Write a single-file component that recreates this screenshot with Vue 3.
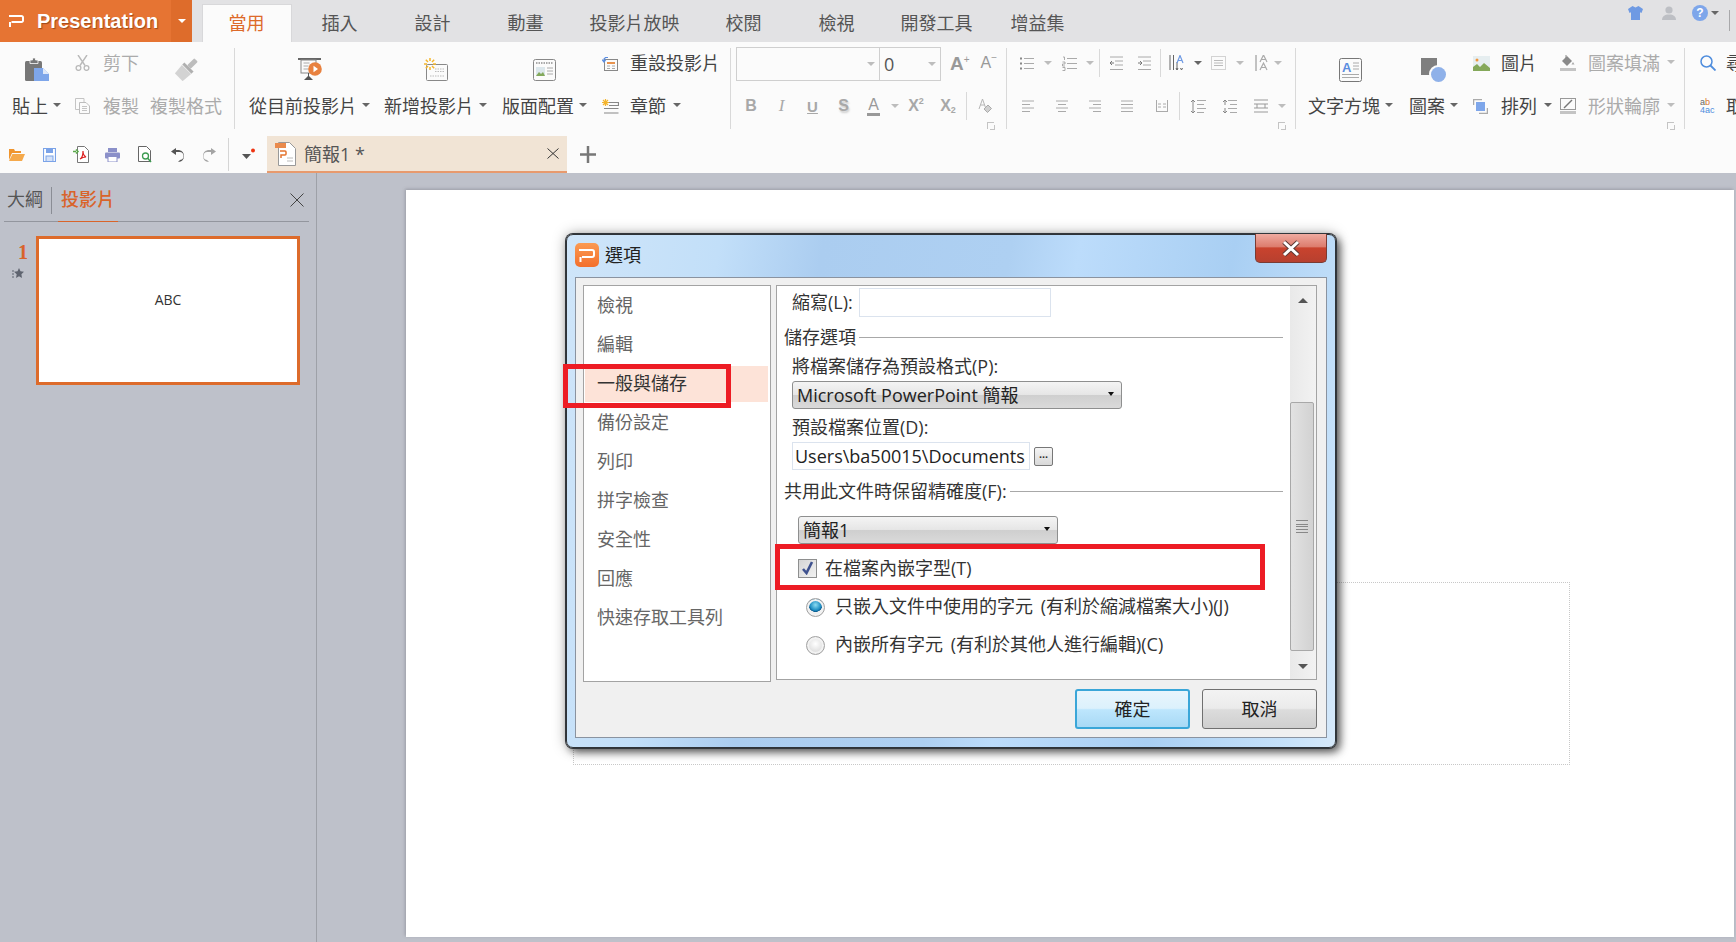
<template>
  <div class="app">
    <!-- title bar -->
    <header class="titlebar">
      <div class="app-btn">
        <svg class="app-logo" width="15" height="12" viewBox="0 0 15 12"><path d="M0 1h12.500a1.500 1.500 0 0 1 1.500 1.500v3A1.500 1.500 0 0 1 12.500 7H2.500M1 7v5" fill="none" stroke="#fff" stroke-width="2" /></svg>
        <span class="app-name">Presentation</span>
        <span class="app-drop"><i class="caret white" /></span>
      </div>
      <nav class="tabs">
        <div v-for="t in tabs" :key="t.label" class="tab" :class="[t.size, { active: t.active }]">{{ t.label }}</div>
      </nav>
      <div class="top-icons">
        <svg width="15" height="14" viewBox="0 0 15 14"><path d="M4.500 0 0 3l1.500 4L3 6.300V14h9V6.300l1.500.7L15 3l-4.500-3-3 1.600z" fill="#6f9ae3" /></svg>
        <svg class="gap-user" width="14" height="14" viewBox="0 0 14 14"><circle cx="7" cy="4" r="3.600" fill="#bdbfc4" /><path d="M0 14c0-4 3-5 5-5.500h4c2 .5 5 1.500 5 5.500z" fill="#bdbfc4" /></svg>
        <span class="help">?</span>
        <i class="caret help-caret" />
        <span class="top-sep" />
      </div>
    </header>

    <!-- ribbon -->
    <section class="ribbon">
      <div class="groups">
        <div class="group g-clip">
          <div class="big">
            <div class="big-icon">
              <svg width="24" height="23" viewBox="0 0 24 23"><rect y="3" width="17" height="20" rx="1.500" fill="#777" /><path d="M5 2h2.500V0h3v2H13v3.500H5z" fill="#777" stroke="#fbfbfb" stroke-width=".8" /><path d="M9 10h9l6 6v7H9z" fill="#7ea6ea" /><path d="M18 10v6h6z" fill="#dfe8f8" /></svg>
            </div>
            <div class="big-label">貼上<i class="caret" /></div>
          </div>
          <div class="col m-cut">
            <div class="si off">
              <span class="si-ico"><svg width="15" height="16" viewBox="0 0 15 16"><path d="M3 0l7 10.500M12 0 5 10.500" fill="none" stroke="#b9b9b9" stroke-width="1.400" /><circle cx="3.500" cy="13" r="2.400" fill="none" stroke="#b9b9b9" stroke-width="1.300" /><circle cx="11.500" cy="13" r="2.400" fill="none" stroke="#b9b9b9" stroke-width="1.300" /></svg></span>
              剪下
            </div>
            <div class="si off">
              <span class="si-ico"><svg width="15" height="16" viewBox="0 0 15 16"><path d="M9 4V.5H.5v11H4" fill="none" stroke="#c4c4c4" /><path d="M4.500 4.500H11l3.500 3.500v7.500h-10z" fill="#fbfbfb" stroke="#bdbdbd" /><path d="M7 8.500h5M7 10.500h5M7 12.500h5" stroke="#c4c4c4" /></svg></span>
              複製
            </div>
          </div>
          <div class="big m-fmt off">
            <div class="big-icon">
              <svg width="23" height="23" viewBox="0 0 23 23"><g transform="rotate(45 11.500 11.500)"><rect x="9" y="-2" width="5" height="10" rx="1" fill="#bdbdbd" /><rect x="5" y="8" width="13" height="3" fill="#b0b0b0" /><path d="M5 11.500h13l-1 11H6z" fill="#d3d3d3" /></g></svg>
            </div>
            <div class="big-label">複製格式</div>
          </div>
        </div>

        <div class="group g-slide">
          <div class="big">
            <div class="big-icon">
              <svg width="24" height="23" viewBox="0 0 24 23"><path d="M0 1h23" stroke="#666" stroke-width="2" /><rect x="3" y="2" width="15" height="13" fill="#fbfbfb" stroke="#888" /><path d="M5.500 5h6M5.500 8h5M5.500 11h5" stroke="#aaa" /><circle cx="17" cy="11" r="6.800" fill="#e8813f" /><path d="M15.500 7.800 20 11l-4.500 3.200z" fill="#fff" /><path d="M10 15v3l-4 4h9l-4-4v-3z" fill="#555" /></svg>
            </div>
            <div class="big-label">從目前投影片<i class="caret" /></div>
          </div>
          <div class="big m-new">
            <div class="big-icon">
              <svg width="24" height="23" viewBox="0 0 24 23"><rect x="2.500" y="6.500" width="21" height="16" rx="1" fill="#fbfbfb" stroke="#888" /><path d="M11 11h10M11 13.500h10M6 18h14" stroke="#bbb" stroke-dasharray="1.500 1" /><path d="M6 0v3M6 9v3M0 6h3M9 6h3M1.800 1.800 4 4M8 8l2.200 2.200M10.200 1.800 8 4M4 8l-2.200 2.200" stroke="#f5b62c" stroke-width="1.500" /></svg>
            </div>
            <div class="big-label">新增投影片<i class="caret" /></div>
          </div>
          <div class="big m-lay">
            <div class="big-icon">
              <svg width="23" height="22" viewBox="0 0 23 22"><rect x=".5" y=".5" width="22" height="21" rx="2" fill="#fbfbfb" stroke="#888" /><path d="M3 4h17" stroke="#aaa" stroke-width="2" stroke-dasharray="1.500 1" /><rect x="3" y="8" width="9" height="9" fill="#dce7ec" /><path d="M3 17l3-4 2 2 2-2 2 4z" fill="#83a95c" /><path d="M14 9h6M14 12h6M14 15h6" stroke="#aaa" /></svg>
            </div>
            <div class="big-label">版面配置<i class="caret" /></div>
          </div>
          <div class="col m-reset">
            <div class="si">
              <span class="si-ico"><svg width="16" height="15" viewBox="0 0 16 15"><rect x="2.500" y="3.500" width="13" height="11" fill="#fbfbfb" stroke="#888" /><path d="M5 7h8" stroke="#e8934f" stroke-width="2" /><path d="M5 10h3M10 10h3M5 12.500h3M10 12.500h3" stroke="#aaa" /><path d="M6 1.500H3.500L2 3v2M0 3.500 2 6l2-2.500" fill="none" stroke="#5b8de0" stroke-width="1.200" /></svg></span>
              重設投影片
            </div>
            <div class="si">
              <span class="si-ico"><svg width="17" height="15" viewBox="0 0 17 15"><path d="M3.500 0v7M0 3.500h7M1 1l5 5M6 1 1 6" stroke="#f4b42c" stroke-width="1.200" /><path d="M7 3.500h9.500v3H7M2 9.500h14.500M2 14h14.500" fill="none" stroke="#888" stroke-width="1.200" /></svg></span>
              章節<i class="caret" />
            </div>
          </div>
        </div>

        <div class="group g-font">
          <div class="cell font-r1">
            <div class="combo">
              <span class="combo-name"><i class="caret light" /></span>
              <span class="combo-size">0<i class="caret light" /></span>
            </div>
            <span class="grow-a">A<sup>+</sup></span>
            <span class="shrink-a">A<sup>−</sup></span>
          </div>
          <div class="cell font-r2">
            <span class="tx b">B</span>
            <span class="tx i">I</span>
            <span class="tx u">U</span>
            <span class="tx s">S</span>
            <span class="tx color-a">A</span>
            <i class="caret light" />
            <span class="tx">X<small>2</small></span>
            <span class="tx">X<sub>2</sub></span>
            <span class="mini-sep" />
            <svg width="14" height="16" viewBox="0 0 14 16"><path d="M1 11 4.500 1 8 11M2.500 7h4" fill="none" stroke="#b5b5b5" /><path d="m6 11 4-4 3.500 3.500-4 4z" fill="#d0d0d0" stroke="#aaa" /></svg>
          </div>
          <i class="launcher" />
        </div>

        <div class="group g-para">
          <div class="cell para-r1">
            <svg width="14" height="15" viewBox="0 0 14 15"><path d="M4 2.500h10M4 7.500h10M4 12.500h10" stroke="#aaa" /><path d="M0 2.500h2M0 7.500h2M0 12.500h2" stroke="#888" stroke-width="2" /></svg>
            <i class="caret light" />
            <svg width="15" height="15" viewBox="0 0 15 15"><path d="M5 2.500h10M5 7.500h10M5 12.500h10" stroke="#aaa" /><path d="M1 1h1.500v3M.5 6h2.500v2H.5v2H3M.5 11.500H3v3H.5" fill="none" stroke="#999" stroke-width=".8" /></svg>
            <i class="caret light" />
            <span class="mini-sep tall" />
            <svg width="13" height="15" viewBox="0 0 13 15"><path d="M0 1h13M5 5h8M5 9h8M0 13.500h13" stroke="#aaa" /><path d="M4 7H0m2-2-2 2 2 2" fill="none" stroke="#777" /></svg>
            <svg width="13" height="15" viewBox="0 0 13 15"><path d="M0 1h13M5 5h8M5 9h8M0 13.500h13" stroke="#aaa" /><path d="M0 7h4M2 5l2 2-2 2" fill="none" stroke="#777" /></svg>
            <span class="mini-sep tall" />
            <svg width="16" height="16" viewBox="0 0 16 16"><path d="M1 0v15M4.500 0v15M8 7v8" stroke="#666" /><path d="M7 13l1 2 1-2M11.500 13l1 2 1-2" fill="none" stroke="#666" /><path d="M8 8 11 .5 14 8M9.500 5.500h3" fill="none" stroke="#6f9ae3" stroke-width="1.200" /></svg>
            <i class="caret" />
            <svg width="15" height="14" viewBox="0 0 15 14"><rect x=".5" y=".5" width="14" height="13" fill="none" stroke="#aaa" stroke-dasharray="1 1" /><path d="M3 4.500h9M3 7h9M3 9.500h9" stroke="#bbb" /></svg>
            <i class="caret light" />
            <span />
            <svg width="16" height="16" viewBox="0 0 16 16"><path d="M1 0v16" stroke="#888" /><path d="M5 7 8.500 0 12 7M6.500 4.500h4M5 15l3.500-7 3.500 7M6.500 12.500h4" fill="none" stroke="#aaa" stroke-width="1.200" /></svg>
            <i class="caret light" />
          </div>
          <div class="cell para-r2">
            <svg width="12" height="12" viewBox="0 0 12 12"><path d="M0 1h12M0 4.500h8M0 8h12M0 11.500h8" stroke="#aaa" /></svg>
            <svg width="12" height="12" viewBox="0 0 12 12"><path d="M0 1h12M2 4.500h8M0 8h12M2 11.500h8" stroke="#aaa" /></svg>
            <svg width="12" height="12" viewBox="0 0 12 12"><path d="M0 1h12M4 4.500h8M0 8h12M4 11.500h8" stroke="#aaa" /></svg>
            <svg width="12" height="12" viewBox="0 0 12 12"><path d="M0 1h12M0 4.500h12M0 8h12M0 11.500h12" stroke="#aaa" /></svg>
            <svg width="12" height="12" viewBox="0 0 12 12"><path d="M.5 0v12M11.500 0v12M0 11.500h12M2 4h3M7 4h3M2 7h3M7 7h3" stroke="#aaa" /></svg>
            <span class="mini-sep tall" />
            <svg width="16" height="15" viewBox="0 0 16 15"><path d="M7 1.500h9M7 5.500h7M7 9.500h9M7 13.500h7" stroke="#aaa" /><path d="M3 1v13M1 3l2-2 2 2M1 12l2 2 2-2" fill="none" stroke="#888" /></svg>
            <svg width="15" height="15" viewBox="0 0 15 15"><path d="M6 1.500h9M8 5.500h7M6 9.500h9M8 13.500h7" stroke="#aaa" /><path d="M3 6V1M1 3l2-2 2 2M3 9v5M1 12l2 2 2-2" fill="none" stroke="#888" /></svg>
            <svg width="14" height="14" viewBox="0 0 14 14"><path d="M0 1h14M0 5h14M0 9h14M0 13h14M3 5v4M11 5v4" stroke="#999" /></svg>
            <i class="caret light" />
          </div>
          <i class="launcher" />
        </div>

        <div class="group g-draw">
          <div class="big m-text">
            <div class="big-icon">
              <svg width="23" height="24" viewBox="0 0 23 24"><rect x=".5" y=".5" width="22" height="23" rx="2" fill="#fbfbfb" stroke="#777" /><text x="3" y="14" class="ico-a">A</text><path d="M14 5h6M14 8h6M14 11h6M3 16.500h17M3 19.500h17" stroke="#aaa" /></svg>
            </div>
            <div class="big-label">文字方塊<i class="caret" /></div>
          </div>
          <div class="big m-shape">
            <div class="big-icon">
              <svg width="25" height="24" viewBox="0 0 25 24"><rect width="16" height="17" fill="#7f7f7f" /><circle cx="17" cy="16" r="9" fill="#fbfbfb" /><circle cx="17.500" cy="16.500" r="7.500" fill="#8fb1e9" /></svg>
            </div>
            <div class="big-label">圖案<i class="caret" /></div>
          </div>
          <div class="col m-pic">
            <div class="si">
              <span class="si-ico"><svg width="17" height="15" viewBox="0 0 17 15"><rect width="17" height="15" fill="#e6eef0" /><circle cx="4" cy="4" r="1.500" fill="#f0963e" /><path d="M0 15v-4l4-3 3 3 4-4 6 5v3z" fill="#84a85a" /></svg></span>
              圖片
            </div>
            <div class="si">
              <span class="si-ico"><svg width="15" height="15" viewBox="0 0 15 15"><path d="M.5 6V.5H9M14.500 9v5.500H6" fill="none" stroke="#aaa" stroke-width="1.500" /><rect x="3" y="3" width="9" height="9" fill="#7ea6ea" /></svg></span>
              排列<i class="caret" />
            </div>
          </div>
          <div class="col m-fill">
            <div class="si off">
              <span class="si-ico"><svg width="16" height="16" viewBox="0 0 16 16"><path d="M7 1 2 6l5 5 5-5z" fill="#8a8a8a" /><path d="M6 0v3" stroke="#8a8a8a" /><path d="M13 7l1.500 2.500h-3z" fill="#aaa" /><rect y="13" width="16" height="3" fill="#c4c4c4" /></svg></span>
              圖案填滿<i class="caret light" />
            </div>
            <div class="si off">
              <span class="si-ico"><svg width="16" height="16" viewBox="0 0 16 16"><rect x=".5" y=".5" width="15" height="11" fill="none" stroke="#999" /><path d="M4 10 12 2" stroke="#777" stroke-width="1.500" /><rect y="13" width="16" height="3" fill="#c4c4c4" /></svg></span>
              形狀輪廓<i class="caret light" />
            </div>
          </div>
          <i class="launcher" />
        </div>

        <div class="group g-find">
          <div class="col">
            <div class="si">
              <span class="si-ico"><svg width="16" height="16" viewBox="0 0 16 16"><circle cx="6.500" cy="6.500" r="5.500" fill="none" stroke="#4f8ddd" stroke-width="1.500" /><path d="m10.500 10.500 5 5" stroke="#4f8ddd" stroke-width="1.800" /></svg></span>
              尋找
            </div>
            <div class="si">
              <span class="si-ico"><svg width="16" height="16" viewBox="0 0 16 16"><text x="0" y="7" class="ico-ab">a<tspan fill="#d9752f">b</tspan></text><text x="0" y="15" class="ico-ab blue">4ac</text></svg></span>
              取代
            </div>
          </div>
        </div>
      </div>

      <!-- quick access and document tab -->
      <div class="qat">
        <div class="qat-icons">
          <svg width="16" height="12" viewBox="0 0 16 12"><path d="M0 2V0h5l1 2h6v2H3L0 11z" fill="#f0952e" /><path d="M3.500 5H16l-3 7H0z" fill="#f5a94b" /></svg>
          <svg width="13" height="14" viewBox="0 0 13 14"><path d="M.5.5h12v13H.5z" fill="#fff" stroke="#7ba3e8" stroke-width="1.200" /><rect x="3" y=".5" width="7" height="4.500" fill="#7ba3e8" /><rect x="3" y="8" width="7" height="5.500" fill="#d3e1f8" stroke="#7ba3e8" /></svg>
          <svg width="16" height="17" viewBox="0 0 16 17"><path d="M4.500.5h7l4 4v12h-11z" fill="#fff" stroke="#777" /><path d="M7 13c2-1 3-5 3-8 0 3 1 5 3 6-2 0-4 .5-6 2z" fill="none" stroke="#d22" stroke-width="1.200" /><path d="M0 5.500h3M3 3.500 5 5.500l-2 2" fill="none" stroke="#5aa84a" stroke-width="1.500" /></svg>
          <svg width="15" height="14" viewBox="0 0 15 14"><rect x="3" width="9" height="4" fill="#8b90c9" /><rect y="4.500" width="15" height="6" rx="1" fill="#8b90c9" /><rect x="3" y="8.500" width="9" height="5.500" fill="#fff" stroke="#8b90c9" /></svg>
          <svg width="14" height="17" viewBox="0 0 14 17"><path d="M.5.500h8l4 4v11H.5z" fill="#fff" stroke="#666" /><circle cx="7.500" cy="10" r="3" fill="none" stroke="#3e9c52" stroke-width="1.300" /><path d="m9.500 12 3.500 4" stroke="#3e9c52" stroke-width="1.500" /></svg>
          <svg width="13" height="14" viewBox="0 0 13 14"><path d="M5 4h3a4 4 0 0 1 1 8l-2 2c4 0 6-3 6-6 0-4-3-6-6-6H5V0L0 3.500 5 7z" fill="#555" /></svg>
          <svg width="13" height="14" viewBox="0 0 13 14"><path d="M8 4H5a4 4 0 0 0-1 8l2 2c-4 0-6-3-6-6 0-4 3-6 6-6h2V0l5 3.500L8 7z" fill="#a4a4a4" /></svg>
          <span class="qat-sep" />
          <svg width="14" height="13" viewBox="0 0 14 13"><path d="M0 6h9l-4.500 5z" fill="#555" /><circle cx="11" cy="2.500" r="2" fill="#e31" /></svg>
        </div>
        <div class="doc-tab">
          <svg width="21" height="24" viewBox="0 0 21 24"><path d="M3.500.5h11l6 6v17h-17z" fill="#fff" stroke="#999" /><rect y="1" width="11" height="5" fill="#ea8a4c" /><path d="M5 9h5a1 1 0 0 1 1 1v2a1 1 0 0 1-1 1H6v3" fill="none" stroke="#e3742f" stroke-width="1.500" /><path d="M12 16h6M12 19h6" stroke="#bbb" /></svg>
          <span class="doc-name">簡報1 *</span>
          <svg class="doc-close" width="12" height="11" viewBox="0 0 12 11"><path d="m.5.5 11 10M11.500.5l-11 10" stroke="#333" /></svg>
        </div>
        <svg class="doc-add" width="16" height="17" viewBox="0 0 16 17"><path d="M8 0v17M0 8.500h16" stroke="#777" stroke-width="2.500" /></svg>
      </div>
    </section>

    <!-- workspace -->
    <main class="work">
      <aside class="pane">
        <div class="pane-head">
          <span class="pane-tab">大綱</span>
          <span class="pane-sep" />
          <span class="pane-tab active">投影片</span>
          <svg class="pane-close" width="14" height="14" viewBox="0 0 14 14"><path d="m.5.5 13 13M13.500.5l-13 13" stroke="#444" /></svg>
        </div>
        <div class="thumb-row">
          <div class="thumb-side">
            <span class="thumb-num">1</span>
            <svg width="12" height="10" viewBox="0 0 12 10"><path d="M7 0l1.500 3.300L12 3.800 9.400 6.200 10 10 7 8.200 4 10l.7-3.800L2 3.800l3.500-.5z" fill="#5f6470" /><path d="M0 3h2M0 6h2M0 9h2" stroke="#5f6470" /></svg>
          </div>
          <div class="thumb">ABC</div>
        </div>
      </aside>
      <div class="canvas">
        <div class="slide">
          <div class="placeholder" />
        </div>
      </div>
    </main>

    <!-- options dialog -->
    <div class="dialog">
      <div class="dlg-title">
        <span class="dlg-logo">
          <svg width="16" height="13" viewBox="0 0 16 13"><path d="M0 1h13a2 2 0 0 1 2 2v3a2 2 0 0 1-2 2H3M1.500 8v5" fill="none" stroke="#fff" stroke-width="2" /></svg>
        </span>
        選項
      </div>
      <div class="dlg-close">
        <svg width="20" height="17" viewBox="0 0 20 17"><path d="m3 2 14 13M17 2 3 15" stroke="#5c3a36" stroke-width="5" /><path d="m3 2 14 13M17 2 3 15" stroke="#fff" stroke-width="3" /></svg>
      </div>
      <div class="dlg-inner">
        <div class="dlg-body">
          <ul class="opt-list">
            <li v-for="o in options" :key="o" class="opt" :class="{ selected: o === current }">{{ o }}</li>
          </ul>
          <div class="opt-pane">
            <div class="form">
              <div class="row abbr">
                <label class="abbr-label">縮寫(L):</label>
                <span class="field abbr-field" />
              </div>
              <div class="legend first">儲存選項<span class="rule" /></div>
              <div class="lbl save-lbl">將檔案儲存為預設格式(P):</div>
              <div class="select fmt-select">Microsoft PowerPoint 簡報<i class="caret black" /></div>
              <div class="lbl path-lbl">預設檔案位置(D):</div>
              <div class="row path-row">
                <span class="field path-field">Users\ba50015\Documents</span>
                <span class="browse">...</span>
              </div>
              <div class="legend second">共用此文件時保留精確度(F):<span class="rule" /></div>
              <div class="select doc-select">簡報1<i class="caret black" /></div>
              <div class="row check-row">
                <span class="check">
                  <svg width="13" height="14" viewBox="0 0 13 14"><path d="M2 8l3.500 4L11 1" fill="none" stroke="#3f528f" stroke-width="2.600" /></svg>
                </span>
                在檔案內嵌字型(T)
              </div>
              <div class="row radio-row one"><span class="radio on" />只嵌入文件中使用的字元 (有利於縮減檔案大小)(J)</div>
              <div class="row radio-row two"><span class="radio" />內嵌所有字元 (有利於其他人進行編輯)(C)</div>
            </div>
            <div class="scrollbar">
              <div class="sb-up"><i class="sb-arrow up" /></div>
              <div class="sb-thumb"><span class="grip" /></div>
              <div class="sb-down"><i class="sb-arrow" /></div>
            </div>
          </div>
        </div>
        <div class="dlg-foot">
          <button class="btn primary">確定</button>
          <button class="btn">取消</button>
        </div>
      </div>
    </div>

    <!-- red annotation boxes -->
    <div class="mark mark-one" />
    <div class="mark mark-two" />
  </div>
</template>

<script setup>
const tabs = [
  { label: '當用', active: true },
  { label: '插入' },
  { label: '設計' },
  { label: '動畫' },
  { label: '投影片放映', size: 'w5' },
  { label: '校閱' },
  { label: '檢視' },
  { label: '開發工具', size: 'w4' },
  { label: '增益集', size: 'w3' }
]

const options = ['檢視', '編輯', '一般與儲存', '備份設定', '列印', '拼字檢查', '安全性', '回應', '快速存取工具列']
const current = '一般與儲存'
</script>

<style>
html, body { margin: 0; background: #bec1ca; }
</style>

<style scoped>
.app {
  position: relative;
  width: 1736px;
  height: 942px;
  overflow: hidden;
  display: flex;
  flex-direction: column;
  background: #bec1ca;
  color: #444;
  font-family: "Open Sans", "Noto Sans CJK TC", sans-serif;
  font-size: 18px;
}

.caret {
  display: inline-block;
  flex: none;
  width: 0;
  height: 0;
  border-left: 4px solid transparent;
  border-right: 4px solid transparent;
  border-top: 4px solid #666;
}
.caret.light { border-top-color: #bdbdbd; }
.caret.white { border-top-color: #fff; }
.caret.black { border-top-color: #111; }

/* title bar */
.titlebar {
  flex: none;
  height: 42px;
  display: flex;
  background: #e2e2e4;
}
.app-btn {
  width: 192px;
  display: flex;
  align-items: center;
  background: #e67433;
  color: #fff;
}
.app-logo { margin-left: 9px; }
.app-name {
  margin-left: 13px;
  font-family: "Liberation Sans", sans-serif;
  font-weight: bold;
  font-size: 20px;
  text-shadow: 1px 1px 1px #9c4a1c;
}
.app-drop {
  margin-left: auto;
  width: 21px;
  height: 100%;
  background: #de6c2b;
  display: flex;
  align-items: center;
  justify-content: center;
}
.tabs {
  display: flex;
  margin-left: 8px;
}
.tab {
  width: 93px;
  margin-top: 4px;
  padding-bottom: 2px;
  box-sizing: border-box;
  display: flex;
  align-items: center;
  justify-content: center;
  color: #555;
}
.tab.w5 { width: 125px; }
.tab.w4 { width: 107px; }
.tab.w3 { width: 95px; }
.tab.active {
  width: 90px;
  margin-left: 1.5px;
  margin-right: 1.5px;
  background: #fbfbfb;
  color: #dd6a2a;
  box-shadow: inset 1px 1px 0 #d8d8da, inset -1px 0 0 #d8d8da;
}
.top-icons {
  margin-left: auto;
  display: flex;
  align-items: flex-start;
  padding-top: 6px;
}
.gap-user { margin-left: 19px; }
.help {
  margin: -1px 0 0 16px;
  width: 16px;
  height: 16px;
  border-radius: 50%;
  background: #7ea6ea;
  color: #fff;
  font: bold 12px/16px "Liberation Sans", sans-serif;
  text-align: center;
}
.help-caret { margin: 5px 0 0 3px; border-top-color: #666; }
.top-sep {
  width: 1px;
  height: 21px;
  margin: 4px 6px 0 10px;
  background: #a8a8aa;
}

/* ribbon */
.ribbon {
  flex: none;
  height: 131px;
  background: #fbfbfb;
}
.groups {
  display: flex;
  height: 94px;
  padding-top: 6px;
  box-sizing: border-box;
}
.group {
  position: relative;
  flex: none;
  height: 81px;
  box-sizing: border-box;
  border-right: 1px solid #d9d9d9;
  display: flex;
  align-items: flex-start;
}
.g-clip { width: 235px; padding-left: 12px; }
.g-slide { width: 496px; padding-left: 14px; }
.g-font { width: 276px; padding-left: 5px; flex-direction: column; gap: 13px; }
.g-para { width: 289px; padding-left: 7px; flex-direction: column; gap: 13px; }
.g-draw { width: 389px; padding-left: 12px; }
.g-find { width: 51px; padding-left: 15px; border-right: 0; overflow: hidden; }

.big { display: flex; flex-direction: column; }
.big-icon {
  height: 43px;
  display: flex;
  align-items: center;
  justify-content: center;
}
.big-label {
  height: 30px;
  padding-bottom: 2px;
  box-sizing: border-box;
  display: flex;
  align-items: center;
  gap: 5px;
  white-space: nowrap;
}
.col {
  display: flex;
  flex-direction: column;
  gap: 13px;
}
.si {
  height: 30px;
  padding-bottom: 2px;
  box-sizing: border-box;
  display: flex;
  align-items: center;
  white-space: nowrap;
}
.si .caret { margin-left: 7px; }
.si-ico {
  flex: none;
  width: 28px;
  margin-top: 2px;
  display: flex;
  align-items: center;
}
.g-find .si-ico { width: 26px; }
.off { color: #ababab; }

.m-cut { margin-left: 14px; }
.m-fmt { margin-left: 11px; }
.m-new { margin-left: 14px; }
.m-lay { margin-left: 15px; }
.m-reset { margin-left: 15px; }
.m-shape { margin-left: 16px; }
.m-pic { margin-left: 15px; }
.m-fill { margin-left: 8px; }

.cell {
  height: 30px;
  display: flex;
  align-items: center;
}
.font-r1 { width: 265px; }
.combo {
  width: 205px;
  height: 34px;
  margin-top: 2px;
  box-sizing: border-box;
  border: 1px solid #cfcfcf;
  display: flex;
  flex: none;
}
.combo-name {
  width: 143px;
  border-right: 1px solid #cfcfcf;
  display: flex;
  align-items: center;
  justify-content: flex-end;
  padding-right: 4px;
  box-sizing: border-box;
}
.combo-size {
  flex: 1;
  display: flex;
  align-items: center;
  justify-content: space-between;
  padding: 0 4px;
  color: #555;
}
.grow-a, .shrink-a {
  font-family: "Liberation Sans", sans-serif;
  font-weight: bold;
  color: #999;
  line-height: 1;
}
.grow-a { margin-left: 9px; font-size: 19px; }
.shrink-a { margin-left: 11px; font-size: 16px; font-weight: normal; }
.grow-a sup, .shrink-a sup { font-size: 10px; font-weight: normal; vertical-align: 7px; line-height: 0; }

.font-r2 {
  display: grid;
  grid-template-columns: 30px 31px 31px 31px 29px 13px 30px 34px 3px 33px;
  justify-items: center;
  align-items: center;
}
.tx {
  font: bold 16px "Liberation Sans", sans-serif;
  color: #a8a8a8;
}
.tx.i { font: italic 17px "Liberation Serif", serif; color: #aaa; }
.tx.u { text-decoration: underline; font-size: 15px; }
.tx.s { text-shadow: 1px 2px 2px #ccc; }
.tx.color-a { border-bottom: 3px solid #999; line-height: 17px; color: #999; padding: 0 1px; font-weight: normal; }
.tx small { font-size: 9px; vertical-align: 7px; line-height: 0; }
.tx sub { font-size: 9px; vertical-align: -2px; line-height: 0; }
.mini-sep { width: 1px; height: 28px; background: #d9d9d9; }

.para-r1, .para-r2 {
  display: grid;
  justify-items: center;
  align-items: center;
}
.para-r1 { grid-template-columns: 26px 15px 29px 11px 8px 27px 29px 2px 32px 9px 33px 9px 6px 26px 6px; }
.para-r1 > .caret:last-child { justify-self: end; }
.para-r2 { grid-template-columns: 28px 40px 26px 38px 31px 4px 34px 29px 34px 7px; }

.launcher {
  position: absolute;
  right: 12px;
  bottom: 0;
  width: 6px;
  height: 6px;
  border: 1px solid #c4c4c4;
  border-right-width: 0;
  border-bottom-width: 0;
  box-shadow: 2px 2px 0 -1px #c4c4c4;
}
.g-para .launcher { right: 10px; }
.g-draw .launcher { right: 10px; }

.ico-a { font: bold 13px "Liberation Sans", sans-serif; fill: #5b8de0; }
.ico-ab { font: 9px "Liberation Sans", sans-serif; fill: #666; }
.ico-ab.blue { fill: #4f8ddd; }

/* quick access row */
.qat {
  display: flex;
  align-items: center;
  height: 37px;
}
.qat-icons {
  width: 267px;
  display: grid;
  grid-template-columns: 33px 32px 32px 31px 34px 31px 33px 4px 37px;
  justify-items: center;
  align-items: center;
}
.qat-sep { width: 1px; height: 33px; background: #d5d5d5; }
.doc-tab {
  width: 300px;
  height: 37px;
  box-sizing: border-box;
  display: flex;
  align-items: center;
  padding-left: 8px;
  background: #f1e4d5;
  border-bottom: 2px solid #e89a6d;
  color: #555;
}
.doc-name { margin-left: 8px; padding-bottom: 2px; }
.doc-close { margin-left: auto; margin-right: 8px; }
.doc-add { margin-left: 13px; }

/* workspace */
.work {
  flex: 1;
  display: flex;
  min-height: 0;
}
.pane {
  flex: none;
  width: 317px;
  box-sizing: border-box;
  border-right: 1px solid #9ea1a8;
}
.pane-head {
  position: relative;
  margin: 12px 7px 0 4px;
  height: 36px;
  display: flex;
  border-bottom: 1px solid #93969e;
}
.pane-tab {
  height: 30px;
  line-height: 28px;
  padding-left: 3px;
  color: #555;
}
.pane-tab.active {
  box-sizing: border-box;
  height: 37px;
  width: 60px;
  padding-left: 3px;
  color: #d9642a;
  font-weight: 500;
  border-bottom: 1px solid #d9642a;
}
.pane-sep {
  width: 1px;
  height: 27px;
  margin: 2px 6px 0 8px;
  background: #8a8d95;
}
.pane-close { margin: 8px 5px 0 auto; }
.thumb-row {
  display: flex;
  padding: 14px 0 0 12px;
}
.thumb-side {
  width: 24px;
  display: flex;
  flex-direction: column;
  gap: 6px;
  padding-top: 6px;
}
.thumb-num {
  width: 16px;
  text-align: right;
  font: bold 20px/20px "Liberation Serif", serif;
  color: #d9642a;
}
.thumb {
  width: 264px;
  height: 149px;
  box-sizing: border-box;
  border: 3px solid #dd6b2b;
  padding-bottom: 22px;
  background: #fff;
  display: flex;
  align-items: center;
  justify-content: center;
  font: 14px "Open Sans", sans-serif;
  color: #333;
}
.canvas {
  flex: 1;
  padding: 17px 2px 5px 89px;
  display: flex;
  min-width: 0;
}
.slide {
  flex: 1;
  position: relative;
  background: #fff;
  box-shadow: -1px -1px 3px rgba(90, 90, 100, .35);
}
.placeholder {
  position: absolute;
  left: 167px;
  top: 392px;
  width: 995px;
  height: 181px;
  border: 1px dotted #c8c8c8;
}

/* dialog */
.dialog {
  position: absolute;
  left: 566px;
  top: 234px;
  width: 770px;
  height: 514px;
  box-sizing: border-box;
  padding: 0 8px 9px;
  display: flex;
  flex-direction: column;
  border: 1px solid #2e3338;
  border-radius: 7px;
  background: linear-gradient(100deg, #cfe5f9 0%, #c2dff9 18%, #abcdf0 30%, #aed0f2 52%, #bcdcfb 60%, #a9cff3 78%, #c5e1fa 94%, #d6e9fa 100%);
  box-shadow: 0 0 0 1px #33373c, 0 0 14px rgba(0, 0, 0, .35), 4px 4px 8px rgba(0, 0, 0, .6);
  color: #222;
}
.dlg-title {
  flex: none;
  height: 42px;
  padding-bottom: 4px;
  box-sizing: border-box;
  display: flex;
  align-items: center;
  gap: 6px;
  color: #222;
}
.dlg-logo {
  width: 24px;
  height: 24px;
  margin-top: 2px;
  border-radius: 5px;
  background: linear-gradient(#fb9a52, #f36f2c);
  display: flex;
  align-items: center;
  justify-content: center;
}
.dlg-close {
  position: absolute;
  top: -1px;
  right: 8px;
  width: 72px;
  height: 29px;
  box-sizing: border-box;
  border: 1px solid #7a3b33;
  border-top: 0;
  border-radius: 0 0 5px 5px;
  background: linear-gradient(#efaaa0, #dd7d6e 45%, #c9432e 50%, #b7402f);
  display: flex;
  align-items: center;
  justify-content: center;
}
.dlg-inner {
  flex: 1;
  border: 1px solid #8a93a0;
  background: #f0f0f0;
  padding: 7px 9px 0 7px;
  min-height: 0;
}
.dlg-body {
  display: flex;
  align-items: flex-start;
  gap: 5px;
}
.opt-list {
  flex: none;
  width: 188px;
  height: 397px;
  box-sizing: border-box;
  margin: 0;
  padding: 0;
  list-style: none;
  background: #fff;
  border: 1px solid #a3a3a3;
  display: flex;
  flex-direction: column;
}
.opt {
  height: 36px;
  margin: 2px 2px 1px 1px;
  padding: 0 0 4px 12px;
  box-sizing: border-box;
  display: flex;
  align-items: center;
  color: #666;
}
.opt.selected { background: #fde3d8; color: #333; }
.opt-pane {
  flex: none;
  width: 541px;
  height: 395px;
  box-sizing: border-box;
  border: 1px solid #a3a3a3;
  background: #fff;
  display: flex;
}
.form {
  flex: 1;
  min-width: 0;
  padding: 2px 7px 0 7px;
}
.row { display: flex; align-items: center; }
.abbr { height: 29px; padding-left: 8px; }
.abbr-label { width: 67px; flex: none; padding-bottom: 4px; color: #333; }
.field {
  box-sizing: border-box;
  border: 1px solid #dbe3ee;
  background: #fff;
}
.abbr-field { width: 192px; height: 29px; }
.legend {
  height: 24px;
  line-height: 24px;
  display: flex;
  align-items: center;
  white-space: nowrap;
  color: #333;
}
.legend.first { margin-top: 8px; }
.legend.second { margin-top: 9px; }
.rule {
  flex: 1;
  height: 1px;
  margin-left: 3px;
  background: #a8a8a8;
}
.lbl {
  height: 24px;
  line-height: 24px;
  padding-left: 8px;
  color: #333;
}
.save-lbl { margin-top: 5px; }
.path-lbl { margin-top: 6px; }
.select {
  height: 28px;
  box-sizing: border-box;
  margin-top: 3px;
  border: 1px solid #8e8f8f;
  border-radius: 3px;
  background: linear-gradient(#f4f4f4, #e6e6e6 48%, #cfcfcf 52%, #dadada);
  display: flex;
  align-items: center;
  padding: 0 7px 2px 4px;
  color: #222;
}
.select .caret { margin-left: auto; border-left-width: 3.5px; border-right-width: 3.5px; }
.fmt-select { margin-left: 8px; width: 330px; }
.doc-select { margin: 13px 0 0 14px; width: 260px; }
.path-row { margin: 3px 0 0 8px; height: 28px; gap: 4px; }
.path-field {
  width: 238px;
  height: 28px;
  padding-left: 2px;
  line-height: 26px;
  color: #222;
  white-space: nowrap;
  overflow: hidden;
}
.browse {
  width: 19px;
  height: 19px;
  box-sizing: border-box;
  border: 1px solid #777;
  border-radius: 2px;
  background: linear-gradient(#f5f5f5, #d8d8d8);
  font: bold 11px/13px "Liberation Sans", sans-serif;
  text-align: center;
  color: #333;
}
.check-row {
  margin-top: 12px;
  height: 24px;
  padding: 0 0 2px 14px;
  box-sizing: border-box;
  gap: 8px;
  color: #333;
}
.check {
  width: 19px;
  height: 19px;
  margin-top: 2px;
  box-sizing: border-box;
  border: 1px solid #8e8f8f;
  background: linear-gradient(135deg, #d5d5d5, #f2f2f2);
  display: flex;
  align-items: center;
  justify-content: center;
}
.radio-row {
  height: 24px;
  padding: 0 0 4px 22px;
  box-sizing: border-box;
  gap: 10px;
  white-space: nowrap;
  word-spacing: 3px;
  color: #333;
}
.radio-row.one { margin-top: 15px; }
.radio-row.two { margin-top: 14px; }
.radio {
  flex: none;
  width: 19px;
  height: 19px;
  margin-top: 4px;
  box-sizing: border-box;
  border: 1px solid #a2a2a2;
  border-radius: 50%;
  background: radial-gradient(circle at 50% 40%, #fff, #d8d8d8 75%);
  box-shadow: inset 0 0 0 2px #f2f2f2;
}
.radio.on {
  background: radial-gradient(circle at 50% 35%, #8ddcf2 0, #1f8fc4 38%, #0d5f92 48%, #f2f2f2 52%, #d6d6d6);
}
.scrollbar {
  flex: none;
  width: 26px;
  display: flex;
  flex-direction: column;
  background: linear-gradient(90deg, #e9e9e9, #f2f2f2);
}
.sb-up {
  height: 116px;
  display: flex;
  justify-content: center;
  padding-top: 12px;
  box-sizing: border-box;
}
.sb-down {
  flex: 1;
  display: flex;
  align-items: center;
  justify-content: center;
  padding-top: 2px;
}
.sb-arrow {
  width: 0;
  height: 0;
  border-left: 5px solid transparent;
  border-right: 5px solid transparent;
  border-top: 5px solid #555;
}
.sb-arrow.up { border-top: 0; border-bottom: 5px solid #555; }
.sb-thumb {
  height: 249px;
  width: 24px;
  box-sizing: border-box;
  border: 1px solid #a8a8a8;
  border-radius: 2px;
  background: linear-gradient(90deg, #e2e2e2, #d2d2d2);
  display: flex;
  align-items: center;
  justify-content: center;
}
.grip {
  width: 12px;
  height: 11px;
  border-top: 1px solid #888;
  border-bottom: 1px solid #888;
  background: linear-gradient(#888, #888) 0 50%/100% 1px no-repeat, linear-gradient(#888, #888) 0 25%/100% 1px no-repeat, linear-gradient(#888, #888) 0 75%/100% 1px no-repeat;
}
.dlg-foot {
  display: flex;
  justify-content: flex-end;
  gap: 12px;
  margin-top: 7px;
}
.btn {
  width: 115px;
  height: 40px;
  padding: 0 0 2px;
  border: 1px solid #707070;
  border-radius: 3px;
  background: linear-gradient(#f3f3f3, #ebebeb 48%, #dcdcdc 52%, #cfcfcf);
  font: inherit;
  color: #222;
}
.btn.primary {
  border: 2px solid #3aa6d8;
  background: linear-gradient(#e8f5fc, #dcf1fc 48%, #bde6fd 52%, #a8d9f5);
}

/* annotation boxes */
.mark {
  position: absolute;
  box-sizing: border-box;
  border: 5px solid #ed1c24;
}
.mark-one { left: 563px; top: 364px; width: 168px; height: 44px; }
.mark-two { left: 775px; top: 544px; width: 490px; height: 46px; }
</style>
